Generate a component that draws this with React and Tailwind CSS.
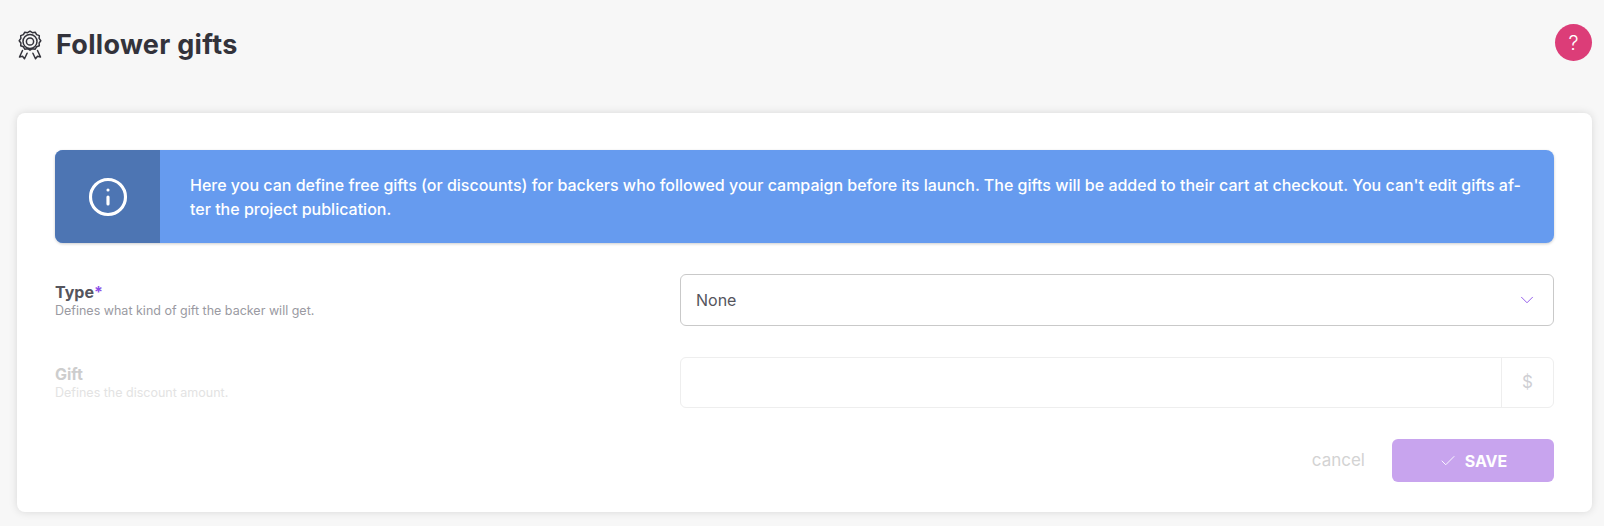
import { Check, ChevronDown, Info } from 'lucide-react'

function GiftIcon() {
  return (
    <svg className="h-[30px] w-[24px] text-[#33333b]" viewBox="0 0 24 30" fill="none" stroke="currentColor" strokeWidth="1.5" strokeLinejoin="round" strokeLinecap="round">
      <path d="M12 1.2l2.4 1.5 2.8-.5 1.4 2.4 2.7 1-.2 2.8 1.7 2.3-1.7 2.3.2 2.8-2.7 1-1.4 2.4-2.8-.5-2.4 1.5-2.4-1.5-2.8.5-1.4-2.4-2.7-1 .2-2.8-1.7-2.3 1.7-2.3-.2-2.8 2.7-1 1.4-2.4 2.8.5z" />
      <circle cx="12" cy="11.5" r="7" />
      <circle cx="12" cy="11.5" r="3.6" />
      <path d="M4.5 20.5l-3 6.5 3-.8 2 2.6 2.6-5.6M19.5 20.5l3 6.5-3-.8-2 2.6-2.6-5.6" />
    </svg>
  )
}

function App() {
  return (
    <main className="h-[526px] overflow-hidden bg-[#f7f7f7] pl-[17px] pr-3 font-['Inter',sans-serif]">
      <header className="flex h-[113px] items-start justify-between">
        <div className="mt-[30px] flex items-center gap-[14px] pl-px">
          <GiftIcon />
          <h1 className="m-0 text-[27px] leading-[30px] font-bold tracking-[0.3px] text-[#33333b]">Follower gifts</h1>
        </div>
        <button className="mt-6 flex h-[37px] w-[37px] items-center justify-center rounded-full bg-[#dc3d78] text-[20px] font-light text-white" type="button">
          ?
        </button>
      </header>

      <section className="flex h-[399px] w-[1575px] flex-col rounded-lg bg-white px-[38px] pt-[37px] shadow-[0_0_8px_rgba(0,0,0,0.13)]">
        <div className="flex h-[93px] overflow-hidden rounded-lg bg-[#669bef] shadow-[0_1px_3px_rgba(0,0,0,0.2)]">
          <div className="flex w-[105px] shrink-0 items-center justify-center bg-[#4d75b3]">
            <Info className="h-[42px] w-[42px] text-white" strokeWidth={1.8} />
          </div>
          <p className="m-0 flex-1 self-center pl-[30px] pr-6 text-[16px] leading-6 font-medium text-white">
            Here you can define free gifts (or discounts) for backers who followed your campaign before its launch. The gifts will be added to their cart at checkout. You can't edit gifts af-<br />ter the project publication.
          </p>
        </div>

        <div className="mt-[31px] flex h-[52px] items-center">
          <div className="w-[625px] shrink-0">
            <p className="m-0 text-[16px] leading-[20px] font-bold text-[#55555d]">
              Type<span className="text-[#8b50e8]">*</span>
            </p>
            <p className="m-0 mt-px text-[12.5px] leading-4 text-[#9a9aa2]">Defines what kind of gift the backer will get.</p>
          </div>
          <div className="flex h-[52px] flex-1 items-center justify-between rounded-md border border-[#c9c9c9] pr-[15px] pl-[15px] text-[16px] text-[#55555d]">
            None
            <ChevronDown className="h-[22px] w-[22px] text-[#8b50e8]" strokeWidth={1} />
          </div>
        </div>

        <div className="mt-[31px] flex h-[51px] items-center">
          <div className="w-[625px] shrink-0">
            <p className="m-0 text-[16px] leading-[20px] font-bold text-[#cdcdcd]">Gift</p>
            <p className="m-0 mt-px text-[12.5px] leading-4 text-[#e3e3e3]">Defines the discount amount.</p>
          </div>
          <div className="flex h-[51px] flex-1 rounded-md border border-[#eeeeee]">
            <div className="flex-1" />
            <div className="flex w-[52px] items-center justify-center border-l border-[#eeeeee] text-[17px] text-[#cfcfd4]">$</div>
          </div>
        </div>

        <div className="mt-[31px] flex items-center justify-end">
          <button className="mr-[27px] bg-transparent text-[17px] text-[#d3d3d3]" type="button">cancel</button>
          <button className="flex h-[43px] w-[162px] items-center justify-center gap-2 rounded-md bg-[#c8a4ee] text-[16px] font-bold text-white" type="button">
            <Check className="h-[18px] w-[18px]" strokeWidth={1.2} />
            SAVE
          </button>
        </div>
      </section>
    </main>
  )
}

export default App
